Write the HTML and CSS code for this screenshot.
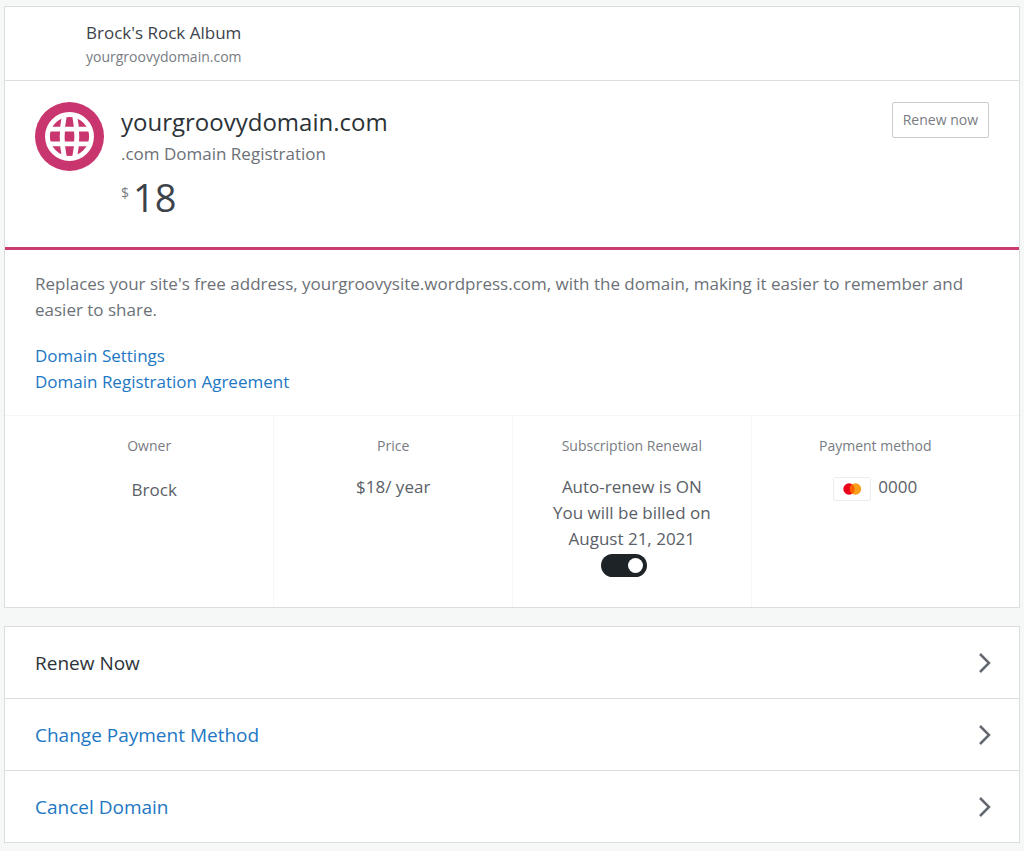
FILE: index.html
```html
<!DOCTYPE html>
<html lang="en">
<head>
<meta charset="utf-8">
<meta name="viewport" content="width=device-width, initial-scale=1">
<title>Manage Purchase</title>
<link rel="stylesheet" href="styles.css">
</head>
<body>
<main class="page">
  <section class="card">
    <header class="site">
      <div class="site-name">Brock's Rock Album</div>
      <div class="site-domain">yourgroovydomain.com</div>
    </header>
    <div class="product">
      <svg class="product-icon" viewBox="-34 -34 68 68" aria-hidden="true">
        <circle r="34" fill="#c9356e"/>
        <g fill="none" stroke="#fff" stroke-width="4.800">
          <circle r="21.700"/>
          <path d="M-21-7.300H21M-21 7.300H21M-5-21Q-9.400 0-5 21M5-21Q9.400 0 5 21"/>
        </g>
      </svg>
      <div class="product-info">
        <h1 class="product-title">yourgroovydomain.com</h1>
        <div class="product-type">.com Domain Registration</div>
        <div class="price"><sup class="currency">$</sup><span class="amount">18</span></div>
      </div>
      <button class="renew" type="button">Renew now</button>
    </div>
    <div class="details">
      <p class="description">Replaces your site's free address, yourgroovysite.wordpress.com, with the domain, making it easier to remember and easier to share.</p>
      <nav class="links">
        <a href="#settings">Domain Settings</a>
        <a href="#agreement">Domain Registration Agreement</a>
      </nav>
    </div>
    <dl class="meta">
      <div class="cell">
        <dt>Owner</dt>
        <dd class="owner">Brock</dd>
      </div>
      <div class="cell">
        <dt>Price</dt>
        <dd>$18/ year</dd>
      </div>
      <div class="cell">
        <dt>Subscription Renewal</dt>
        <dd class="renewal">
          <label for="auto-renew">Auto-renew is ON<br>You will be billed on<br>August 21, 2021</label>
          <input class="toggle" id="auto-renew" type="checkbox" role="switch" checked>
        </dd>
      </div>
      <div class="cell">
        <dt>Payment method</dt>
        <dd class="payment">
          <svg class="brand" viewBox="0 0 38 24" role="img" aria-label="Mastercard">
            <rect x=".5" y=".5" width="37" height="23" rx="1.500" fill="#fff" stroke="#eceded"/>
            <circle cx="16" cy="12" r="5.700" fill="#eb001b"/>
            <circle cx="22.500" cy="12" r="5.700" fill="#f79e1b"/>
            <path d="M19.250 7.300a5.700 5.700 0 0 1 0 9.400a5.700 5.700 0 0 1 0-9.400z" fill="#ff5f00"/>
          </svg>
          <span>0000</span>
        </dd>
      </div>
    </dl>
  </section>

  <nav class="card actions">
    <a class="action primary" href="#renew">Renew Now
      <svg class="chevron" viewBox="0 0 14 22" aria-hidden="true"><path d="M2 2L11 11L2 20"/></svg></a>
    <a class="action" href="#payment">Change Payment Method
      <svg class="chevron" viewBox="0 0 14 22" aria-hidden="true"><path d="M2 2L11 11L2 20"/></svg></a>
    <a class="action" href="#cancel">Cancel Domain
      <svg class="chevron" viewBox="0 0 14 22" aria-hidden="true"><path d="M2 2L11 11L2 20"/></svg></a>
  </nav>
</main>
</body>
</html>
```
FILE: styles.css
```css
* {
  box-sizing: border-box;
}

body {
  margin: 0;
  background: #f6f7f7;
  color: #5a6067;
  font-family: "Open Sans", "Noto Sans", sans-serif;
  font-size: 17px;
  line-height: 26px;
}

a {
  color: #2277c4;
  text-decoration: none;
}

.page {
  display: flex;
  flex-direction: column;
  gap: 18px;
  padding: 6px 4px 8px;
}

.card {
  background: #fff;
  border: 1px solid #dcdddf;
}

.site {
  padding: 13px 30px 13px 81px;
  border-bottom: 1px solid #dcdddf;
}

.site-name {
  line-height: 26px;
  color: #3c434a;
}

.site-domain {
  font-size: 14px;
  line-height: 21px;
  color: #787c82;
}

.product {
  display: flex;
  align-items: flex-start;
  padding: 21px 30px 24px;
  border-bottom: 3px solid #cb3c73;
}

.product-icon {
  flex: none;
  width: 69px;
  height: 69px;
  margin-right: 17px;
}

.product-info {
  flex: 1;
}

.product-title {
  margin: 0;
  font-size: 24px;
  font-weight: 400;
  line-height: 40px;
  color: #2c3338;
}

.product-type {
  line-height: 24px;
  color: #6c7177;
}

.price {
  display: flex;
  align-items: flex-start;
  gap: 4px;
  padding-top: 5px;
}

.currency {
  padding-top: 12px;
  font-size: 14px;
  line-height: 20px;
  color: #787c82;
}

.amount {
  font-size: 38px;
  line-height: 52px;
  color: #3c434a;
}

.renew {
  padding: 6px 10px;
  border: 1px solid #c9cbcd;
  border-radius: 2px;
  background: #fff;
  color: #787c82;
  font: inherit;
  font-size: 14px;
  line-height: 22px;
}

.details {
  padding: 21px 30px 20px;
  color: #6c7177;
}

.description {
  margin: 0 0 20px;
}

.links {
  display: flex;
  flex-direction: column;
  align-items: flex-start;
}

.meta {
  display: grid;
  grid-template-columns: 9fr 8fr 8fr 9fr;
  margin: 0;
  border-top: 1px solid #f6f7f7;
  text-align: center;
}

.cell {
  padding: 19px 10px 30px;
  border-left: 1px solid #f6f7f7;
}

.cell:first-child {
  padding-left: 30px;
  border-left: 0;
}

.cell:last-child {
  padding-right: 30px;
}

.cell dt {
  margin-bottom: 17px;
  font-size: 14px;
  line-height: 22px;
  color: #787c82;
}

.cell dd {
  margin: 0;
}

.cell .owner {
  padding-left: 10px;
  line-height: 32px;
}

.renewal {
  display: flex;
  flex-direction: column;
  align-items: center;
}

.toggle {
  display: flex;
  justify-content: flex-end;
  appearance: none;
  width: 46px;
  height: 23px;
  margin: 2px 15px 0 0;
  padding: 4px;
  border-radius: 12px;
  background: #1d2327;
}

.toggle::before {
  content: "";
  width: 15px;
  height: 15px;
  border-radius: 50%;
  background: #fff;
}

.toggle:not(:checked) {
  justify-content: flex-start;
  background: #a7aaad;
}

.payment {
  display: flex;
  justify-content: center;
  gap: 7px;
}

.brand {
  width: 38px;
  height: 24px;
  margin-top: 3px;
}

.action {
  display: flex;
  align-items: center;
  justify-content: space-between;
  padding: 20px 27px 19px 30px;
  font-size: 19px;
  line-height: 32px;
}

.action + .action {
  border-top: 1px solid #dcdddf;
}

.primary {
  color: #2c3338;
}

.chevron {
  width: 14px;
  height: 22px;
  fill: none;
  stroke: #646970;
  stroke-width: 2.500;
}
```
